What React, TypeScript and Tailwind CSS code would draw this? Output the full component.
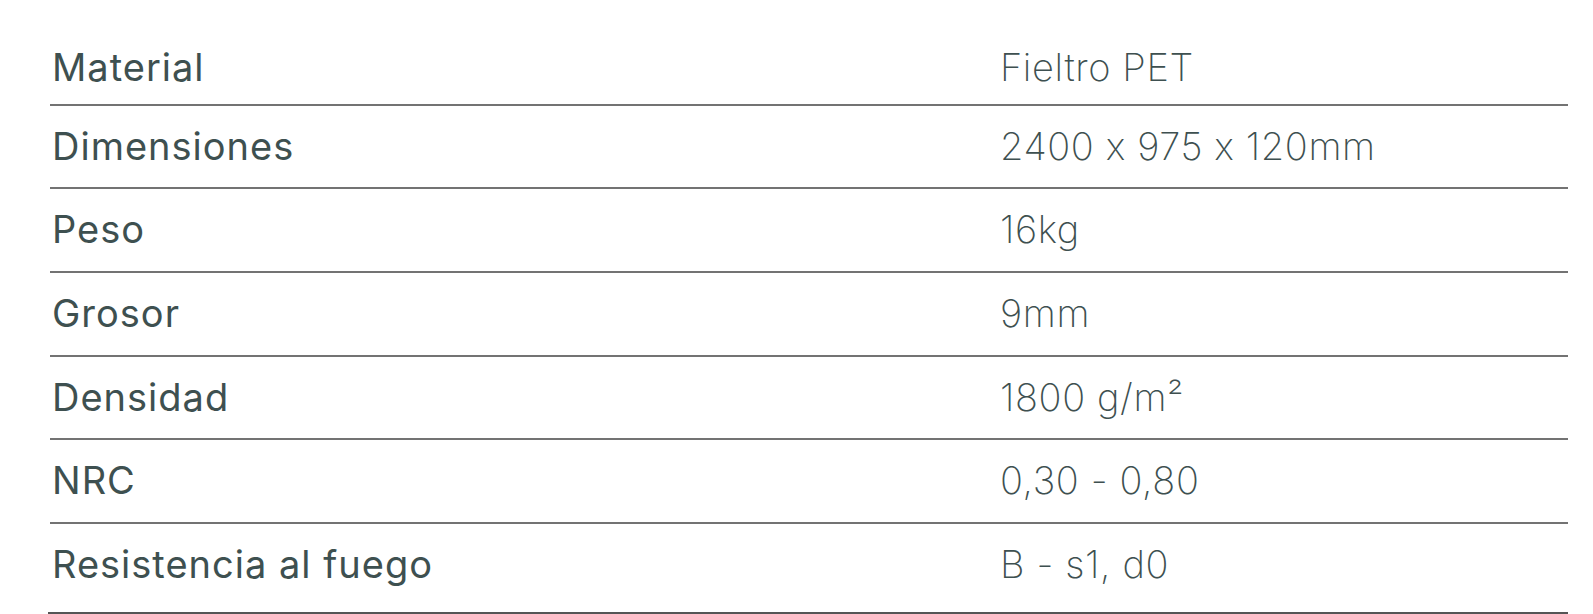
const rows = [
  { label: 'Material', value: 'Fieltro PET' },
  { label: 'Dimensiones', value: '2400 x 975 x 120mm' },
  { label: 'Peso', value: '16kg' },
  { label: 'Grosor', value: '9mm' },
  { label: 'Densidad', value: '1800 g/m²' },
  { label: 'NRC', value: '0,30 - 0,80' },
  { label: 'Resistencia al fuego', value: 'B - s1, d0' },
];

const App = () => {
  return (
    <div className="min-h-screen bg-white font-['Inter',sans-serif] text-[#3e5050] [font-feature-settings:'calt'_0]">
      <div className="ml-[50px] mr-[25px] pt-[22px]">
        {rows.map((row, i) => {
          const first = i === 0;
          const last = i === rows.length - 1;
          return (
            <div
              key={row.label}
              className={`flex border-b-2 ${last ? 'h-[90px] border-[#555] -ml-[2px] pl-[2px]' : 'h-[83.7px] border-[#737373]'} ${first ? 'pt-[26px]' : 'pt-[21px]'}`}
            >
              <div className="w-[950px] pl-[2px] text-[38px] leading-none tracking-[1px]">
                {row.label}
              </div>
              <div className="flex-1 text-[38px] font-extralight leading-none tracking-[0.6px]">
                {row.value}
              </div>
            </div>
          );
        })}
      </div>
    </div>
  );
};

export default App;
